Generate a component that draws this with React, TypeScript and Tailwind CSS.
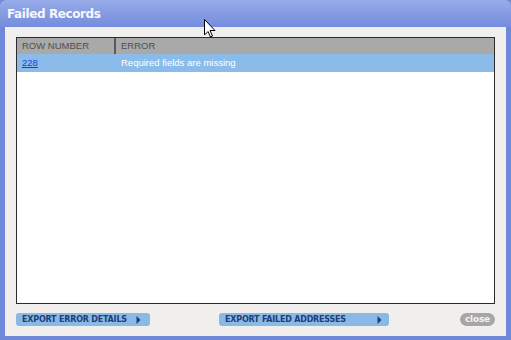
import React from "react";

const rows = [{ num: "228", error: "Required fields are missing" }];

const Arrow: React.FC = () => (
  <svg width="5" height="8" viewBox="0 0 5 8">
    <path d="M0.5 0 L4.5 4 L0.5 8 Z" fill="#1f3f73" />
  </svg>
);

const App: React.FC = () => {
  return (
    <div className="w-[511px] h-[340px] flex flex-col bg-[#6f88d8] font-['Liberation_Sans',Arial,sans-serif] relative overflow-hidden">
      {/* Title bar */}
      <div className="h-[27px] shrink-0 flex items-center px-[7px] bg-gradient-to-b from-[#97ace8] to-[#748cdd] rounded-t-[6px]">
        <span className="text-[#f4f6ff] font-bold text-[12px] font-['DejaVu_Sans',sans-serif] tracking-[-0.4px]">Failed Records</span>
      </div>

      {/* Body */}
      <div className="flex-1 mx-[5px] mb-[4px] bg-[#f0efee] flex flex-col px-[11px] pt-[10px]">
        {/* Table */}
        <div className="h-[267px] border border-[#2c2c2c] bg-white flex flex-col">
          <div className="h-[16px] flex bg-[#a9a9a9] text-[#505050] text-[9.5px] items-center">
            <div className="w-[99px] pl-[5px] border-r-2 border-r-[#5a5a5a] h-full flex items-center">ROW NUMBER</div>
            <div className="pl-[5px]">ERROR</div>
          </div>
          {rows.map((r) => (
            <div key={r.num} className="h-[18px] flex bg-[#8bbce9] items-center text-[9.5px]">
              <div className="w-[99px] pl-[5px]">
                <a href="#" className="text-[#1b3fd6] underline">{r.num}</a>
              </div>
              <div className="pl-[5px] text-white">{r.error}</div>
            </div>
          ))}
        </div>

        {/* Actions */}
        <div className="flex items-center mt-[9px] font-['DejaVu_Sans',sans-serif] font-bold text-[8px] tracking-[-0.2px] text-[#1f3f73]">
          <button type="button" className="w-[134px] h-[13px] flex items-center rounded-[3px] bg-[#8ab9e8] pl-[6px] pr-[9px]">
            EXPORT ERROR DETAILS
            <span className="ml-auto flex"><Arrow /></span>
          </button>
          <button type="button" className="ml-[69px] w-[170px] h-[13px] flex items-center rounded-[3px] bg-[#8ab9e8] pl-[6px] pr-[7px]">
            EXPORT FAILED ADDRESSES
            <span className="ml-auto flex"><Arrow /></span>
          </button>
          <button type="button" className="ml-auto w-[35px] h-[13px] rounded-full bg-[#a6a6a6] text-[#f2f2f2] text-[9px] flex items-center justify-center">
            close
          </button>
        </div>
      </div>

      {/* Mouse pointer over the title bar */}
      <svg className="absolute left-[204px] top-[19px]" width="12" height="19" viewBox="0 0 12 19">
        <path d="M0.5 0.5 L0.5 16 L4 12.5 L6.5 18 L8.5 17 L6 11.5 L11 11.5 Z" fill="white" stroke="black" strokeWidth="1" />
      </svg>
    </div>
  );
};

export default App;
